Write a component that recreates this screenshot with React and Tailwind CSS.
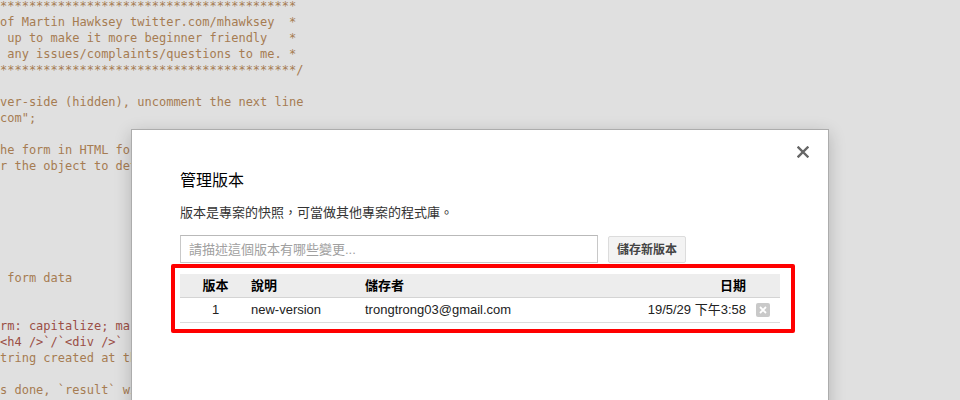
import React from "react";

const codeLines = [
  { t: "*****************************************", c: "text-[#a67c52]" },
  { t: "of Martin Hawksey twitter.com/mhawksey  *", c: "text-[#a67c52]" },
  { t: " up to make it more beginner friendly   *", c: "text-[#a67c52]" },
  { t: " any issues/complaints/questions to me. *", c: "text-[#a67c52]" },
  { t: "*****************************************/", c: "text-[#a67c52]" },
  { t: "", c: "" },
  { t: "ver-side (hidden), uncomment the next line", c: "text-[#a67c52]" },
  { t: "com\";", c: "text-[#a67c52]" },
  { t: "", c: "" },
  { t: "he form in HTML format", c: "text-[#a67c52]" },
  { t: "r the object to determine", c: "text-[#a67c52]" },
  { t: "", c: "" },
  { t: "", c: "" },
  { t: "", c: "" },
  { t: "", c: "" },
  { t: "", c: "" },
  { t: "", c: "" },
  { t: " form data", c: "text-[#a67c52]" },
  { t: "", c: "" },
  { t: "", c: "" },
  { t: "rm: capitalize; margin", c: "text-[#9a4e45]" },
  { t: "<h4 />`/`<div />`", c: "text-[#9a4e45]" },
  { t: "tring created at the", c: "text-[#a67c52]" },
  { t: "", c: "" },
  { t: "s done, `result` will", c: "text-[#a67c52]" },
];

const versions = [
  {
    id: 1,
    note: "new-version",
    author: "trongtrong03@gmail.com",
    date: "19/5/29 下午3:58",
  },
];

function CloseIcon() {
  return (
    <svg width="12" height="12" viewBox="0 0 12 12">
      <path d="M1.5 1.5 L10.5 10.5 M10.5 1.5 L1.5 10.5" stroke="#666" strokeWidth="2.4" strokeLinecap="square" />
    </svg>
  );
}

function App() {
  return (
    <div className="relative w-[960px] h-[400px] overflow-hidden bg-[#e0e0e0]">

      {/* code behind the dialog */}
      <div className="mt-[-2px] font-['DejaVu_Sans_Mono','Liberation_Mono',monospace] text-[12px] leading-[16px]">
        {codeLines.map((line, i) => (
          <div key={i} className={`h-[16px] whitespace-pre ${line.c}`}>
            {line.t}
          </div>
        ))}
      </div>

      {/* dialog */}
      <div className="absolute left-[131px] top-[129px] w-[698px] h-[300px] bg-white border border-[#acacac] shadow-[0_4px_16px_rgba(0,0,0,0.2)] pt-[39px] pl-[48px] font-['Liberation_Sans','Noto_Sans_CJK_TC',sans-serif]">

        <button className="absolute right-[19px] top-[16px] p-0">
          <CloseIcon />
        </button>

        <h2 className="text-[16px] leading-[24px] text-black font-normal">
          管理版本
        </h2>

        <p className="mt-[10px] text-[13px] leading-[20px] text-[#333]">
          版本是專案的快照，可當做其他專案的程式庫。
        </p>

        <div className="mt-[12px] flex items-start gap-[10px]">
          <input
            type="text"
            placeholder="請描述這個版本有哪些變更..."
            className="w-[418px] h-[28px] px-[8px] border border-[#c8c8c8] border-t-[#b9b9b9] text-[13px] text-[#333] placeholder:text-[#a0a0a0] outline-none"
          />
          <button className="mt-[1px] w-[78px] h-[27px] rounded-[2px] bg-[#f3f3f3] border border-[#dcdcdc] text-[12px] font-bold text-[#444]">
            儲存新版本
          </button>
        </div>

        {/* highlighted table */}
        <div className="ml-[-9px] mt-[1px] w-[624px] border-4 border-[#ff0000] rounded-[2px] pt-[6px] pl-[5px] pr-[11px] pb-[6px]">
          <div className="w-[600px] text-[13px]">

            <div className="flex items-center h-[24px] bg-[#ededed] border-b border-[#d4d4d4] font-bold text-black">
              <div className="w-[71px] text-center">版本</div>
              <div className="w-[114px]">說明</div>
              <div className="flex-1">儲存者</div>
              <div className="text-right">日期</div>
              <div className="w-[34px]" />
            </div>

            {versions.map((v) => (
              <div key={v.id} className="flex items-center h-[25px] border-b border-[#dcdcdc] text-[#222]">
                <div className="w-[71px] text-center">{v.id}</div>
                <div className="w-[114px]">{v.note}</div>
                <div className="flex-1">{v.author}</div>
                <div className="text-right">{v.date}</div>
                <div className="w-[34px] flex justify-center">
                  <span className="w-[14px] h-[14px] rounded-[2px] bg-[#c9c9c9] flex items-center justify-center">
                    <svg width="8" height="8" viewBox="0 0 8 8">
                      <path d="M1 1 L7 7 M7 1 L1 7" stroke="#fff" strokeWidth="1.8" />
                    </svg>
                  </span>
                </div>
              </div>
            ))}

          </div>
        </div>

      </div>
    </div>
  );
}

export default App;
